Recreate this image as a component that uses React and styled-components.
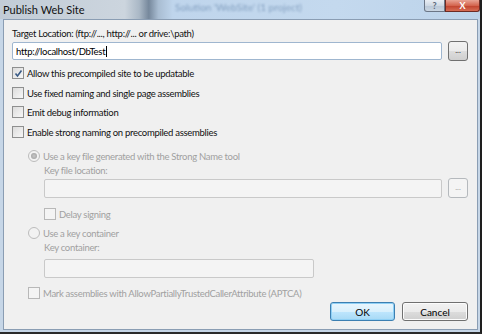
import React from 'react'
import styled, { createGlobalStyle } from 'styled-components'

const GlobalStyle = createGlobalStyle`
  body {
    margin: 0;
    font-family: Lato, "Liberation Sans", sans-serif;
  }
`

const Window = styled.div`
  width: 482px;
  height: 334px;
  box-sizing: border-box;
  display: flex;
  flex-direction: column;
  background: #c6d6e7;
  border-right: 2px solid #1e1e1e;
  border-bottom: 2px solid #2b2b2b;
`

const TitleBar = styled.div`
  height: 19px;
  display: flex;
  align-items: flex-start;
  background: linear-gradient(90deg, #c2ccd6 0%, #ccd5de 26%, #aab8c6 29%, #76889c 31%, #a9bdd2 33%, #bfd5ec 36%, #c4d9ee 70%, #bcd3ea 100%);
  overflow: hidden;
`

const Title = styled.div`
  font-size: 11px;
  color: #111;
  padding: 3px 0 0 3px;
  width: 172px;
`

const Blurred = styled.div`
  font-size: 10px;
  line-height: 10px;
  color: #5b7ca3;
  filter: blur(1.3px);
  padding-top: 2px;
  flex: 1;
  opacity: 0.6;
  white-space: nowrap;
`

const CaptionButton = styled.div`
  height: 12px;
  width: ${p => p.$w}px;
  box-sizing: border-box;
  display: flex;
  align-items: center;
  justify-content: center;
  font-size: 9px;
  font-weight: bold;
  border: 1px solid ${p => p.$close ? '#6d2b24' : '#6b7686'};
  border-top: none;
  border-radius: ${p => p.$close ? '0 0 3px 0' : '0 0 0 3px'};
  color: ${p => p.$close ? '#fff' : '#5d6b7c'};
  background: ${p => p.$close
    ? 'linear-gradient(#e8a394, #d4654f 50%, #c0402b 51%, #d66d55)'
    : 'linear-gradient(#e9eef4, #cfd9e4 50%, #b9c7d6 51%, #cad6e3)'};
`

const Client = styled.div`
  flex: 1;
  margin: 0 2px 2px 3px;
  background: #f0f0f0;
  border: 1px solid #8a9db3;
  padding: 0 9px 0 8px;
  display: flex;
  flex-direction: column;
  font-size: 9.5px;
  letter-spacing: -0.3px;
  color: #111;
`

const Row = styled.div`
  display: flex;
  align-items: center;
  height: ${p => p.$h || 14}px;
  margin-top: ${p => p.$mt || 0}px;
  padding-left: ${p => p.$indent || 0}px;
  gap: ${p => p.$gap ?? 3}px;
  color: ${p => p.$disabled ? '#a0a0a0' : '#111'};
  white-space: nowrap;
`

const TextBox = styled.div`
  box-sizing: border-box;
  height: ${p => p.$h || 19}px;
  width: ${p => p.$w ? p.$w + 'px' : 'auto'};
  flex: ${p => p.$w ? 'none' : 1};
  display: flex;
  align-items: center;
  padding-left: 3px;
  border: 1px solid ${p => p.$disabled ? '#c9c9c9' : '#9fb6cf'};
  border-radius: 2px;
  background: ${p => p.$disabled ? '#f4f4f4' : '#fff'};
  color: #000;
`

const Caret = styled.span`
  display: inline-block;
  width: 1px;
  height: 11px;
  margin-left: 1px;
  background: #000;
`

const BrowseButton = styled.div`
  box-sizing: border-box;
  width: 20px;
  height: 20px;
  margin-left: 6px;
  border-radius: 3px;
  display: flex;
  align-items: center;
  justify-content: center;
  font-size: 8px;
  letter-spacing: 0;
  line-height: 1;
  padding-bottom: 2px;
  border: 1px solid ${p => p.$disabled ? '#b5b9bd' : '#707070'};
  color: ${p => p.$disabled ? '#a0a0a0' : '#333'};
  background: ${p => p.$disabled
    ? '#f4f4f4'
    : 'linear-gradient(#f2f2f2, #ebebeb 50%, #dddddd 51%, #cfcfcf)'};
`

const Box = styled.span`
  box-sizing: border-box;
  width: 12px;
  height: 12px;
  flex: none;
  display: flex;
  align-items: center;
  justify-content: center;
  border: 1px solid ${p => p.$disabled ? '#b8b8b8' : '#8e8f8f'};
  background: ${p => p.$disabled
    ? '#f4f4f4'
    : 'linear-gradient(135deg, #dcdcdc, #f7f7f7)'};
`

const Radio = styled.span`
  box-sizing: border-box;
  width: 12px;
  height: 12px;
  flex: none;
  border-radius: 50%;
  display: flex;
  align-items: center;
  justify-content: center;
  border: 1px solid #bcbcbc;
  background: #f2f2f2;
  &::after {
    content: '';
    display: ${p => p.$checked ? 'block' : 'none'};
    width: 6px;
    height: 6px;
    border-radius: 50%;
    background: radial-gradient(#c8c8c8, #9a9a9a);
  }
`

const Footer = styled.div`
  display: flex;
  justify-content: flex-end;
  gap: 7px;
  margin-top: 2px;
`

const DialogButton = styled.div`
  box-sizing: border-box;
  width: ${p => p.$w}px;
  height: 19px;
  border-radius: 3px;
  display: flex;
  align-items: center;
  justify-content: center;
  font-size: 10px;
  letter-spacing: 0;
  color: #000;
  border: 1px solid ${p => p.$default ? '#3c7fb1' : '#707070'};
  background: ${p => p.$default
    ? 'linear-gradient(#eaf6fd, #d9f0fc 50%, #bee6fd 51%, #a7d9f5)'
    : 'linear-gradient(#f2f2f2, #ebebeb 50%, #dddddd 51%, #cfcfcf)'};
  box-shadow: ${p => p.$default ? 'inset 0 0 0 1px #8fd0f5' : 'inset 0 0 0 1px #fcfcfc'};
`

const Check = ({ checked, disabled }) => (
  <Box $disabled={disabled}>
    {checked && (
      <svg width="9" height="9" viewBox="0 0 9 9">
        <path d="M1.5 4.5 L3.5 7 L7.5 1.5" fill="none" stroke="#3a5b86" strokeWidth="1.6" />
      </svg>
    )}
  </Box>
)

const App = () => {
  return (
    <>
      <GlobalStyle />
      <Window>
        <TitleBar>
          <Title>Publish Web Site</Title>
          <Blurred>Solution 'WebSite' (1 project)</Blurred>
          <CaptionButton $w={21}>?</CaptionButton>
          <CaptionButton $w={35} $close>X</CaptionButton>
        </TitleBar>
        <Client>
          <Row $mt={6}>Target Location: (ftp://..., http://... or drive:\path)</Row>
          <Row $h={20} $mt={1} $gap={0}>
            <TextBox $h={18}>http://localhost/DbTest<Caret /></TextBox>
            <BrowseButton>...</BrowseButton>
          </Row>
          <Row $mt={5}><Check checked />Allow this precompiled site to be updatable</Row>
          <Row $mt={6}><Check />Use fixed naming and single page assemblies</Row>
          <Row $mt={5}><Check />Emit debug information</Row>
          <Row $mt={6}><Check />Enable strong naming on precompiled assemblies</Row>
          <Row $mt={10} $indent={16} $disabled><Radio $checked />Use a key file generated with the Strong Name tool</Row>
          <Row $indent={32} $disabled>Key file location:</Row>
          <Row $h={20} $mt={1} $indent={32} $gap={0}>
            <TextBox $disabled />
            <BrowseButton $disabled>...</BrowseButton>
          </Row>
          <Row $mt={9} $indent={32} $disabled><Check disabled />Delay signing</Row>
          <Row $mt={5} $indent={16} $disabled><Radio />Use a key container</Row>
          <Row $indent={32} $disabled>Key container:</Row>
          <Row $h={20} $mt={4} $indent={32}>
            <TextBox $disabled $w={270} />
          </Row>
          <Row $mt={8} $indent={16} $disabled><Check disabled />Mark assemblies with AllowPartiallyTrustedCallerAttribute (APTCA)</Row>
          <Footer>
            <DialogButton $w={65} $default>OK</DialogButton>
            <DialogButton $w={66}>Cancel</DialogButton>
          </Footer>
        </Client>
      </Window>
    </>
  )
}

export default App
